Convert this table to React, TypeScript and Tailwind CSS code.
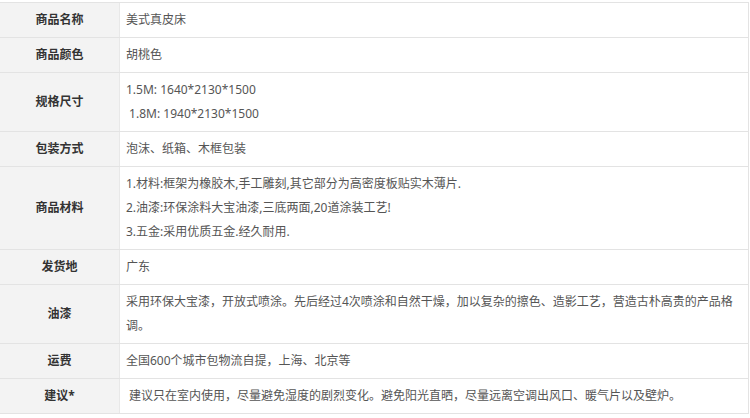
const font = { fontFamily: '"Noto Sans", "Noto Sans CJK SC", sans-serif' };

type Row = { label: string; lines: string[] };

const rows: Row[] = [
  { label: '商品名称', lines: ['美式真皮床'] },
  { label: '商品颜色', lines: ['胡桃色'] },
  { label: '规格尺寸', lines: ['1.5M: 1640*2130*1500', '\u00a01.8M: 1940*2130*1500'] },
  { label: '包装方式', lines: ['泡沫、纸箱、木框包装'] },
  {
    label: '商品材料',
    lines: [
      '1.材料:框架为橡胶木,手工雕刻,其它部分为高密度板贴实木薄片.',
      '2.油漆:环保涂料大宝油漆,三底两面,20道涂装工艺!',
      '3.五金:采用优质五金.经久耐用.',
    ],
  },
  { label: '发货地', lines: ['广东'] },
  {
    label: '油漆',
    lines: [
      '采用环保大宝漆，开放式喷涂。先后经过4次喷涂和自然干燥，加以复杂的擦色、造影工艺，营造古朴高贵的产品格',
      '调。',
    ],
  },
  { label: '运费', lines: ['全国600个城市包物流自提，上海、北京等'] },
  {
    label: '建议*',
    lines: ['\u00a0建议只在室内使用，尽量避免湿度的剧烈变化。避免阳光直晒，尽量远离空调出风口、暖气片以及壁炉。'],
  },
];

export default function App() {
  return (
    <div className="h-[418px] w-[750px] bg-white pt-[2px]" style={font}>
      <div className="w-[749px] border-t border-r border-[#e3e3e3] text-[12px]">
        {rows.map((row) => (
          <div key={row.label} className="flex border-b border-[#e3e3e3]">
            <div className="flex w-[120px] shrink-0 items-center justify-center border-r border-[#e8e8e8] bg-[#f3f3f3] font-bold text-[#333]">
              {row.label}
            </div>
            <div className="flex-1 whitespace-nowrap px-[6px] py-[5px] leading-[24px] text-[#555]">
              {row.lines.map((line, i) => (
                <div key={i}>{line}</div>
              ))}
            </div>
          </div>
        ))}
      </div>
    </div>
  );
}
